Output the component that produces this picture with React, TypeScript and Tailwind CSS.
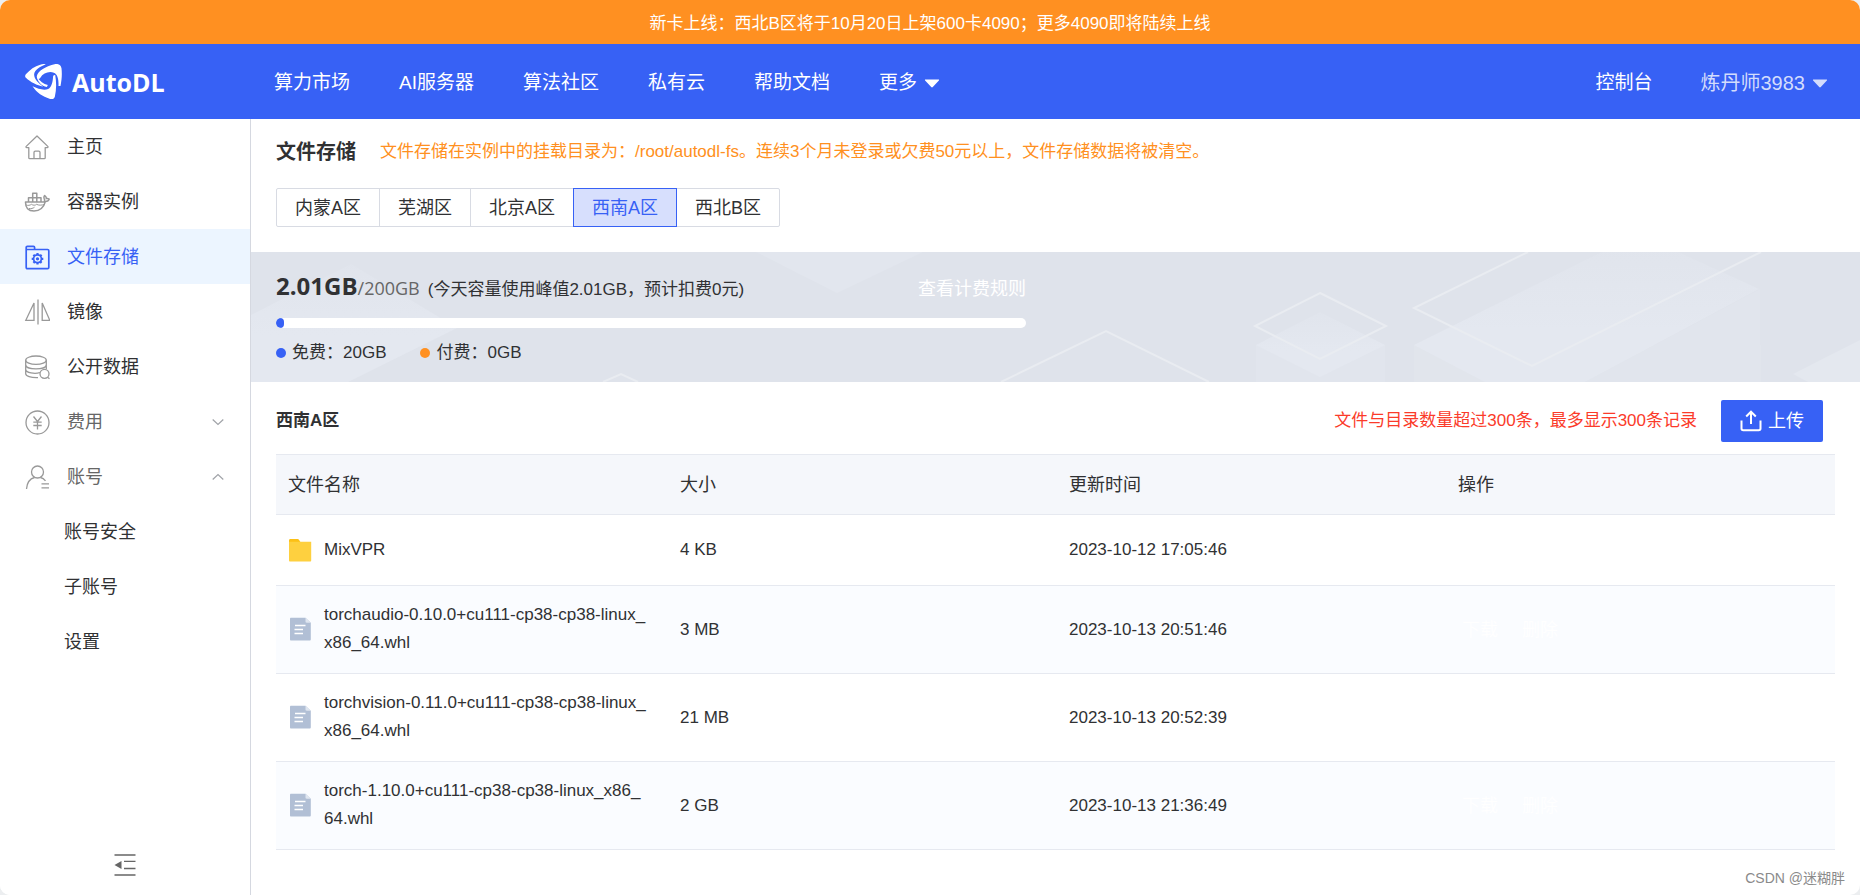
import { ReactNode } from 'react';
import clsx from 'clsx';

const strokeProps = {
  viewBox: '0 0 26 26',
  fill: 'none',
  stroke: 'currentColor',
  strokeWidth: 1.3,
  strokeLinejoin: 'round' as const,
  'aria-hidden': true,
  className: 'h-[26px] w-[26px] shrink-0',
};

const HomeIcon = () => (
  <svg {...strokeProps}>
    <path d="M13 2 2.2 12.4c-.5.6-.2 1.2.6 1.2h2v10.2c0 .6.3.9.9.9h14.6c.6 0 .9-.3.9-.9V13.6h2c.8 0 1.1-.6.6-1.2Z" />
    <path d="M10 24.7v-6.2c0-.9.4-1.3 1.3-1.3h3.4c.9 0 1.3.4 1.3 1.3v6.2" />
  </svg>
);

const DockerIcon = () => (
  <svg {...strokeProps} strokeWidth={1.5}>
    <path d="M1.5 13h18.3c1-.8 1-2 .4-3.4-.4-1-.3-2.2.5-3.1 1.1.8 1.7 1.9 1.6 3.1 1-.4 2-.2 2.9.4-.5 1.6-1.9 2.4-3.7 2.4-1.7 6-5.2 9.6-11.5 9.6-5.7 0-8.6-3.300-8.500-9Z" />
    <path d="M4.5 13V8.7h12.5V13M4.5 8.7h8.300V4.200H8.700V13M12.800 4.200V13" />
    <path d="M2 16c2 .8 4 .3 5.500-.7 1.500 1.200 3.800 1.200 5.200 0 1.500 1.100 5 1.200 8.300-.1M5 19.500c2 .4 4-.1 5.500-1.300" strokeWidth="1" />
  </svg>
);

const StorageIcon = () => (
  <svg {...strokeProps} strokeWidth={1.7}>
    <path d="M2.2 23.5V3.500c0-.8.4-1.200 1.200-1.200h6c.8 0 1.200.4 1.200 1.200v2h13c.8 0 1.200.4 1.200 1.200v16.800c0 .8-.4 1.200-1.200 1.200H3.400c-.8 0-1.200-.4-1.200-1.200ZM2.200 5.500h8.400" />
    <circle cx="13.5" cy="14.8" r="3.9" />
    <circle cx="13.5" cy="14.8" r=".8" />
    <path d="M13.500 9v1.900M13.500 18.700v1.900M7.700 14.800h1.900M17.400 14.800h1.900M9.400 10.700l1.300 1.300M16.300 17.600l1.300 1.300M9.400 18.900l1.300-1.300M16.300 12l1.300-1.300" strokeWidth="2.2" />
  </svg>
);

const MirrorIcon = () => (
  <svg {...strokeProps}>
    <path d="M14 .5v25M10 4v17.300H1.800Zm8.200 0v17.300h7.600Z" strokeLinejoin="miter" />
  </svg>
);

const DatabaseIcon = () => (
  <svg {...strokeProps}>
    <ellipse cx="12" cy="6.2" rx="10.3" ry="4.2" />
    <path d="M1.7 6.2v13.500c0 2.300 5 4.200 12.300 3.900M22.300 6.200v9M1.700 10.700c0 5.600 20.600 5.600 20.600 0M1.700 15.200c0 3.800 9.500 5 14.200 3.300" />
    <circle cx="20.5" cy="19.8" r="4.5" />
    <path d="m23.5 23.2 2 1.5" />
  </svg>
);

const FeeIcon = () => (
  <svg {...strokeProps}>
    <circle cx="13.5" cy="13.5" r="11.5" />
    <path d="m9.5 7.500 4 5 4-5M13.500 12.500v8M9.300 13.200h8.400M9.300 16.500h8.400" />
  </svg>
);

const AccountIcon = () => (
  <svg {...strokeProps}>
    <circle cx="13.5" cy="8" r="6" />
    <path d="M2.5 25c.5-6.500 3.500-10.300 8-11.500M16.500 13.500c2 .5 3.700 1.700 5 3.300M17.500 19.800h7.500M17.500 23.800h7.500" />
  </svg>
);

const LogoMark = () => (
  <svg viewBox="0 0 110 105" aria-hidden className="h-[35px] w-[37px]" fill="currentColor">
    <path d="M2 31C14 17 29 6 45 2c6-2 12-2 17-1C44 8 29 18 27 30c-1 12 9 25 27 38-18-4-39-14-51-26-4-3-4-7-1-11Z" />
    <path d="M35 36C38 22 58 8 91 0c10-1 16 3 18 13 2 17 1 33-3 53h-6c1-20-3-36-14-40-15-5-32 1-41 16-5 6-11 1-10-6Z" />
    <path d="M22 67c17 8 34 13 47 8 11-6 14-23 15-40l6-3c4 22 4 45-1 66-2 7-8 9-16 6C53 98 35 87 22 67Z" />
    <path d="M35 38c9 14 20 21 33 25l-3 6C49 65 38 54 35 38Z" />
  </svg>
);

const Caret = () => (
  <svg viewBox="0 0 16 9" aria-hidden className="h-[9px] w-4" fill="currentColor">
    <path d="M1.5.5h13c.6 0 .8.5.4.9L8.800 8c-.5.5-1.100.5-1.600 0L1.100 1.400C.7 1 .9.5 1.500.5Z" />
  </svg>
);

const Chevron = ({ up }: { up?: boolean }) => (
  <svg viewBox="0 0 12 8" aria-hidden className="h-2 w-3" fill="none" stroke="#a0a3a8" strokeWidth="1.2">
    <path d={up ? 'M.7 6.5 6 1.5l5.3 5' : 'M.7 1.5 6 6.5l5.3-5'} />
  </svg>
);

const FolderIcon = () => (
  <svg viewBox="0 0 24 24" aria-hidden className="h-6 w-6 shrink-0">
    <path d="M1 2.5C1 1.600 1.500 1 2.400 1h7.200c.7 0 1.100.3 1.500.9L12.400 4v4H1Z" fill="#fcc015" />
    <path d="M1 3.8h22.200v18.400c0 .9-.3 1.200-1.200 1.200H2.200c-.9 0-1.200-.3-1.200-1.200Z" fill="#fed03f" />
  </svg>
);

const FileIcon = () => (
  <svg viewBox="0 0 24 24" aria-hidden className="h-6 w-6 shrink-0">
    <path d="M3.2.7h14.300l5.300 5v16.500c0 .9-.4 1.300-1.300 1.300H3.200c-.9 0-1.200-.4-1.200-1.300V2c0-.9.3-1.300 1.200-1.300Z" fill="#b1bfd5" />
    <path d="M17.5.7v3.800c0 .8.4 1.200 1.200 1.200h4.100Z" fill="#dfe6f0" />
    <path d="M7 8.5h10.500M6.500 12.500H15M6.500 16.500H15" stroke="#fff" strokeWidth="1.3" />
  </svg>
);

const UploadIcon = () => (
  <svg viewBox="0 0 22 22" aria-hidden className="h-[22px] w-[22px]" fill="none" stroke="currentColor" strokeWidth="2">
    <path d="M1.5 10.500v8c0 1.200.6 1.800 1.800 1.800h15.400c1.200 0 1.800-.6 1.800-1.800v-8M11 14V2M6.200 6.500 11 1.700l4.800 4.800" />
  </svg>
);

const CollapseIcon = () => (
  <svg viewBox="0 0 22 22" aria-hidden className="h-[22px] w-[22px]" fill="none" stroke="#666" strokeWidth="1.3">
    <path d="M.5 1h21M10 7.300h11.500M10 14.500h11.500M.5 21h21" />
    <path d="M.5 11 7.500 7v8Z" fill="#666" stroke="none" />
  </svg>
);

const navItems = ['算力市场', 'AI服务器', '算法社区', '私有云', '帮助文档'];

interface MenuItem {
  label: string;
  icon: ReactNode;
  active?: boolean;
  state?: 'open' | 'closed';
}

const menuItems: MenuItem[] = [
  { label: '主页', icon: <HomeIcon /> },
  { label: '容器实例', icon: <DockerIcon /> },
  { label: '文件存储', icon: <StorageIcon />, active: true },
  { label: '镜像', icon: <MirrorIcon /> },
  { label: '公开数据', icon: <DatabaseIcon /> },
  { label: '费用', icon: <FeeIcon />, state: 'closed' },
  { label: '账号', icon: <AccountIcon />, state: 'open' },
];

const accountItems = ['账号安全', '子账号', '设置'];

const regions = ['内蒙A区', '芜湖区', '北京A区', '西南A区', '西北B区'];
const currentRegion = '西南A区';

const files = [
  { name: 'MixVPR', size: '4 KB', time: '2023-10-12 17:05:46', folder: true },
  { name: 'torchaudio-0.10.0+cu111-cp38-cp38-linux_x86_64.whl', size: '3 MB', time: '2023-10-13 20:51:46', actions: ['下载', '删除'] },
  { name: 'torchvision-0.11.0+cu111-cp38-cp38-linux_x86_64.whl', size: '21 MB', time: '2023-10-13 20:52:39' },
  { name: 'torch-1.10.0+cu111-cp38-cp38-linux_x86_64.whl', size: '2 GB', time: '2023-10-13 21:36:49', actions: ['下载', '删除'] },
];

const usage = { used: 2.01, total: 200 };

const Header = () => (
  <header className="flex h-[75px] items-center bg-[#3761f5] pr-8 text-[19px] text-white">
    <a href="#" className="flex w-[250px] shrink-0 items-center gap-[10px] pl-[25px]">
      <LogoMark />
      <span className="font-['Open_Sans',sans-serif] text-[25px] leading-8 font-bold">AutoDL</span>
    </a>
    <div className="flex flex-1 items-center pt-[3px] pl-6">
      <nav className="flex flex-1 items-center gap-[49px]">
        {navItems.map((item) => (
          <a key={item} href="#">{item}</a>
        ))}
        <button type="button" className="flex items-center gap-[7px]">
          更多 <Caret />
        </button>
      </nav>
      <a href="#">控制台</a>
      <button type="button" className="ml-12 flex items-center gap-[7px] text-xl text-[#d3dcfc]">
        炼丹师3983 <Caret />
      </button>
    </div>
  </header>
);

const Sidebar = () => (
  <aside className="flex w-[251px] shrink-0 flex-col border-r border-[#d5d8e0] bg-white text-lg text-[#303133]">
    <nav>
      {menuItems.map((item) => {
        const classes = clsx(
          'flex h-[55px] w-full items-center gap-[17px] pl-6 pr-[26px]',
          item.active && 'bg-[#ecf5ff] text-[#3761f5]',
          item.state && 'text-[#666]',
        );
        const content = (
          <>
            <span className={item.active ? 'text-[#3761f5]' : 'text-[#999]'}>{item.icon}</span>
            <span className="flex-1 text-left">{item.label}</span>
            {item.state && <Chevron up={item.state === 'open'} />}
          </>
        );
        return item.state ? (
          <button key={item.label} type="button" aria-expanded={item.state === 'open'} className={classes}>
            {content}
          </button>
        ) : (
          <a key={item.label} href="#" className={classes}>
            {content}
          </a>
        );
      })}
      {accountItems.map((label) => (
        <a key={label} href="#" className="flex h-[55px] items-center pl-16">
          {label}
        </a>
      ))}
    </nav>
    <button type="button" aria-label="collapse" className="mx-auto mt-auto mb-[19px]">
      <CollapseIcon />
    </button>
  </aside>
);

/* Faint isometric blocks behind the usage numbers */
const UsageBackdrop = () => (
  <svg viewBox="0 0 1609 130" preserveAspectRatio="xMaxYMin slice" aria-hidden className="absolute inset-0 h-full w-full">
    <defs>
      <linearGradient id="fade" x1="0" y1="0" x2="0" y2="1">
        <stop offset="0" stopColor="#e4e8f0" stopOpacity=".3" />
        <stop offset=".6" stopColor="#e4e8f0" />
      </linearGradient>
    </defs>
    <path d="M0 63 100 12 206 76 97 130H0Z" fill="url(#fade)" />
    <path d="M505 0h167l-86 41Z" fill="#e2e6ee" />
    <path d="M1163 93h347v37h-347Z" fill="#e1e5ec" />
    <path d="M1163 93 1351 0h76l81 37-174 93h-100Z" fill="url(#fade)" />
    <path d="M1509 37v93h-175Z" fill="#e1e5ed" />
    <path d="M1005 93h129v37h-129Z" fill="#e1e5ed" />
    <path d="m1069 60 65 33-65 32-64-32Z" fill="url(#fade)" />
    <path d="m1542 122 67-34v42h-52Z" fill="#e4e8ef" />
    <g fill="none" stroke="#e9ecf1" strokeWidth="2">
      <path d="m1069 41 66 33-66 33-65-33Z" />
      <path d="m1277 0-114 56 118 58L1510 0" />
      <path d="m750 130 105-51 103 51M352 130l18-8 17 8" />
    </g>
  </svg>
);

const UsagePanel = () => (
  <section className="relative h-[130px] bg-[#dfe3eb] px-[25px] pt-[17px] text-[#303133]">
    <UsageBackdrop />
    <div className="relative max-w-[750px]">
      <div className="flex h-10 items-center justify-between">
        <p className="flex items-baseline pb-[5px]">
          <strong className="font-['Open_Sans',sans-serif] text-2xl">{usage.used}GB</strong>
          <span className="font-['Open_Sans',sans-serif] text-lg text-[#666]">/{usage.total}GB</span>
          <span className="ml-2 text-[17px]">(今天容量使用峰值2.01GB，预计扣费0元)</span>
        </p>
        <a href="#" className="text-lg text-white">查看计费规则</a>
      </div>
      <div className="mt-[9px] h-[10px] overflow-hidden rounded-full bg-white">
        <div className="h-full rounded-full bg-[#3761f5]" style={{ width: `${(usage.used / usage.total) * 100}%` }} />
      </div>
      <div className="mt-[13px] flex h-6 items-center gap-[34px] text-[17px]">
        <span className="flex items-center gap-[6px]">
          <i className="h-[10px] w-[10px] rounded-full bg-[#3761f5]" />
          免费：20GB
        </span>
        <span className="flex items-center gap-[6px]">
          <i className="h-[10px] w-[10px] rounded-full bg-[#ff9021]" />
          付费：0GB
        </span>
      </div>
    </div>
  </section>
);

const FileTable = () => (
  <table className="w-full table-fixed border-t border-[#e6e9f0] text-left text-[17px] text-[#303133]">
    <thead>
      <tr className="h-[60px] border-b border-[#e6e9f0] bg-[#f5f7fb] text-lg">
        {['文件名称', '大小', '更新时间', '操作'].map((title) => (
          <th key={title} className="px-3 font-normal first:w-[392px]">{title}</th>
        ))}
      </tr>
    </thead>
    <tbody>
      {files.map((file) => (
        <tr key={file.name} className="h-[71px] border-b border-[#e6e9f0] even:bg-[#fafcff]">
          <td className="pt-[15px] pr-5 pb-4 pl-3">
            <div className="flex items-center gap-3 leading-7">
              {file.folder ? <FolderIcon /> : <FileIcon />}
              <span className="break-all">{file.name}</span>
            </div>
          </td>
          <td className="px-3">{file.size}</td>
          <td className="px-3">{file.time}</td>
          <td className="px-4">
            <div className="flex gap-6 text-lg text-white">
              {file.actions?.map((action) => (
                <button key={action} type="button">{action}</button>
              ))}
            </div>
          </td>
        </tr>
      ))}
    </tbody>
  </table>
);

export default function App() {
  return (
    <div className="bg-[#eceef0]">
      <div className="relative flex min-h-screen flex-col overflow-hidden rounded-[10px] bg-white font-['Liberation_Sans','Noto_Sans_CJK_SC',sans-serif]">
        <div className="flex h-11 items-center justify-center bg-[#ff9021] pt-[3px] text-[17px] text-white">
          新卡上线：西北B区将于10月20日上架600卡4090；更多4090即将陆续上线
        </div>
        <Header />

        <div className="flex flex-1">
          <Sidebar />

          <main className="min-w-0 flex-1">
            {/* Title and region tabs */}
            <div className="px-[25px] pt-[18px] pb-[25px]">
              <div className="flex h-[30px] items-center gap-6">
                <h1 className="text-xl font-bold text-[#303133]">文件存储</h1>
                <p className="text-[17px] text-[#ff9021]">
                  文件存储在实例中的挂载目录为：/root/autodl-fs。连续3个月未登录或欠费50元以上，文件存储数据将被清空。
                </p>
              </div>
              <div className="mt-[21px] flex">
                {regions.map((region) => (
                  <button
                    key={region}
                    type="button"
                    className={clsx(
                      '-ml-px h-[39px] border px-[18px] text-lg first:ml-0 first:rounded-l-xs last:rounded-r-xs',
                      region === currentRegion
                        ? 'z-10 border-[#3761f5] bg-[#d7dffd] text-[#3761f5]'
                        : 'border-[#d8dbe3] text-[#303133]',
                    )}
                  >
                    {region}
                  </button>
                ))}
              </div>
            </div>

            <UsagePanel />

            {/* File list */}
            <section className="px-[25px] pt-[18px]">
              <div className="mb-3 flex items-center pr-3">
                <h2 className="flex-1 text-[17px] font-bold text-[#303133]">{currentRegion}</h2>
                <span className="text-[17px] text-[#fb3b2a]">文件与目录数量超过300条，最多显示300条记录</span>
                <button type="button" className="ml-6 flex h-[42px] w-[102px] items-center justify-center gap-[6px] rounded-xs bg-[#3761f5] text-lg text-white">
                  <UploadIcon />
                  上传
                </button>
              </div>
              <FileTable />
            </section>
          </main>
        </div>

        <span className="absolute right-[15px] bottom-[7px] text-sm text-[#8a8a8a]">CSDN @迷糊胖</span>
      </div>
    </div>
  );
}
